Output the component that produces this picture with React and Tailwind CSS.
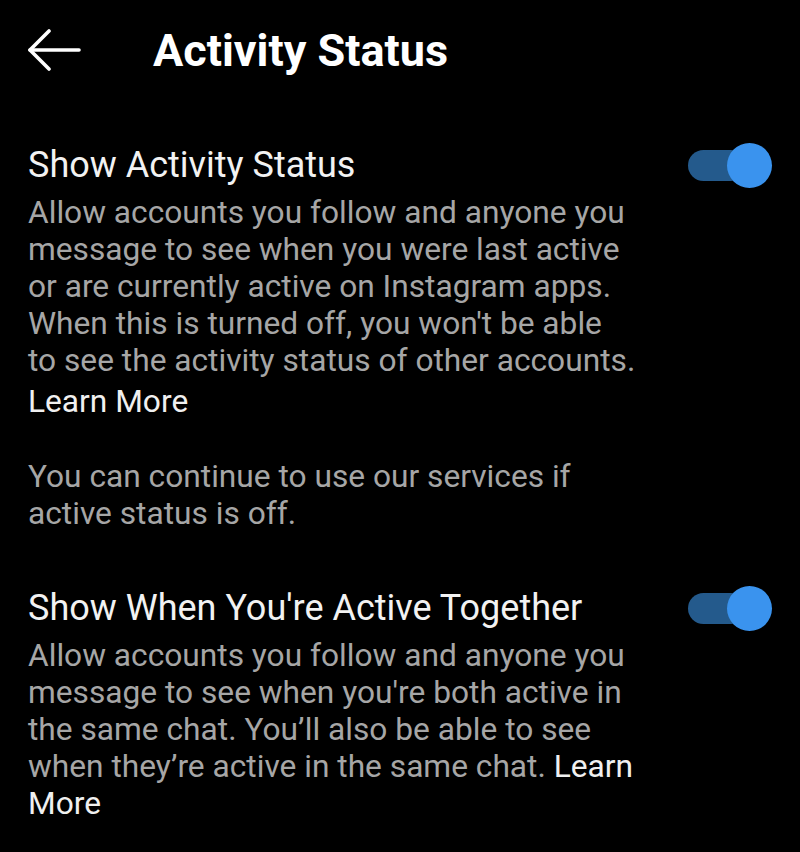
const Toggle = () => (
    <div className="relative w-[86px] h-[46px] shrink-0">
        <div className="absolute left-0 top-[8px] w-[58px] h-[31px] rounded-full bg-[#245a8c]" />
        <div className="absolute right-[2px] top-[1px] w-[45px] h-[45px] rounded-full bg-[#3a93ee]" />
    </div>
);

const BackArrow = () => (
    <svg width="54" height="44" viewBox="0 0 54 44" fill="none" stroke="white" strokeWidth="3.6" strokeLinecap="round" strokeLinejoin="round">
        <path d="M2 22 H51" />
        <path d="M21 3 L2 22 L21 41" />
    </svg>
);

const App = () => {
    return (
        <div className="w-[800px] h-[852px] bg-black text-white overflow-hidden" style={{ fontFamily: 'Roboto, "Noto Sans", sans-serif' }}>
            <div className="flex items-center h-[100px] pl-[28px]">
                <BackArrow />
                <h1 className="ml-[71px] text-[45px] font-bold leading-none">Activity Status</h1>
            </div>

            <div className="pl-[28px] pr-[28px] pt-[40px]">
                <div className="flex justify-between">
                    <div>
                        <h2 className="text-[36px] leading-[50px] text-[#f2f2f2]">Show Activity Status</h2>
                        <p className="mt-[4px] text-[31.7px] leading-[37px] text-[#a6a6a6] whitespace-nowrap">
                            Allow accounts you follow and anyone you<br />
                            message to see when you were last active<br />
                            or are currently active on Instagram apps.<br />
                            When this is turned off, you won't be able<br />
                            to see the activity status of other accounts.
                        </p>
                        <p className="mt-[4px] text-[31.7px] leading-[37px] text-[#f0f0f0]">Learn More</p>
                        <p className="mt-[38px] text-[31.7px] leading-[37px] text-[#a6a6a6] whitespace-nowrap">
                            You can continue to use our services if<br />
                            active status is off.
                        </p>
                    </div>
                    <div className="-mr-[2px] pt-[2px]">
                        <Toggle />
                    </div>
                </div>

                <div className="flex justify-between mt-[51px]">
                    <div>
                        <h2 className="text-[36px] leading-[50px] text-[#f2f2f2]">Show When You're Active Together</h2>
                        <p className="mt-[4px] text-[31.7px] leading-[37px] text-[#a6a6a6] whitespace-nowrap">
                            Allow accounts you follow and anyone you<br />
                            message to see when you're both active in<br />
                            the same chat. You’ll also be able to see<br />
                            when they’re active in the same chat. <span className="text-[#f0f0f0]">Learn</span><br />
                            <span className="text-[#f0f0f0]">More</span>
                        </p>
                    </div>
                    <div className="-mr-[2px] pt-[2px]">
                        <Toggle />
                    </div>
                </div>
            </div>
        </div>
    );
};

export default App;
